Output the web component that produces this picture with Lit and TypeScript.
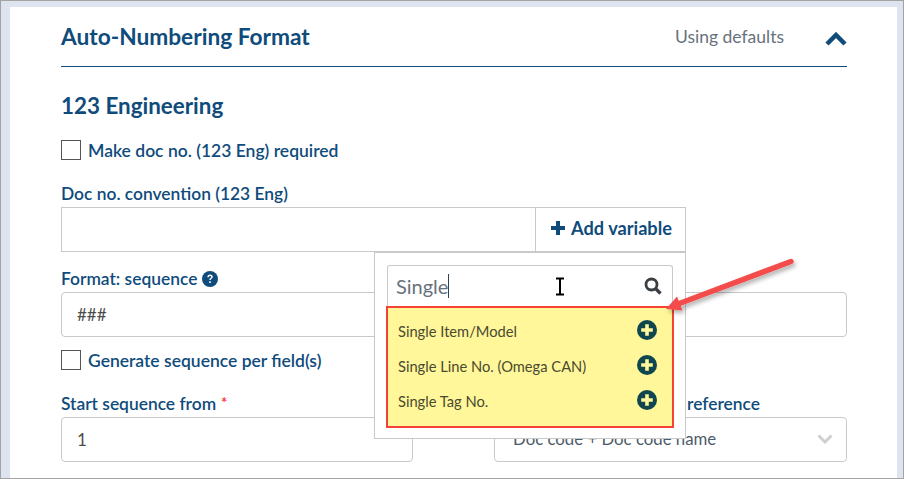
import { LitElement, html, css, svg } from "lit";
import { customElement } from "lit/decorators.js";

const plus = html`<svg class="plus" viewBox="0 0 20 20" width="20" height="20"><circle cx="10" cy="10" r="10" fill="#10474f"/><path d="M8.200 4.200h3.600v4h4v3.600h-4v4H8.200v-4h-4V8.200h4z" fill="#fff79a"/></svg>`;

@customElement("app-root")
export class AppRoot extends LitElement {
  static styles = css`
    :host { display: block; width: 904px; height: 479px; overflow: hidden; font-family: Lato, "Open Sans", sans-serif; color: #0f4c7c; }
    * { box-sizing: border-box; }
    .frame { width: 904px; height: 479px; background: #dde3ef; border: 1px solid #a3a3a3; padding: 6px 6px 0 9px; display: flex; }
    .panel { position: relative; flex: 1; background: #fff; padding: 0 50px 0 51px; }
    .head { height: 60px; border-bottom: 1px solid #0f4c7c; display: flex; align-items: center; }
    .head h2 { margin: 0; flex: 1; font-size: 22.700px; font-weight: 700; line-height: 58px; }
    .status { font-size: 17.500px; color: #68727c; margin-right: 41px; margin-bottom: 0; }
    .chev { display: block; margin-top: 5px; }
    h3 { margin: 24px 0 0; font-size: 22.400px; font-weight: 700; line-height: 30px; }
    .check { display: flex; align-items: center; gap: 7px; font-size: 17.500px; font-weight: 600; line-height: 20px; }
    .check span.txt { position: relative; top: 1px; }
    .box { width: 20px; height: 20px; border: 1px solid #555; background: #fff; }
    .c1 { margin-top: 19px; }
    .c2 { margin-top: 13px; }
    .label { font-size: 17.400px; font-weight: 600; line-height: 20px; display: flex; align-items: center; gap: 5px; }
    .l1 { margin-top: 24px; }
    .l2 { margin-top: 24px; }
    .l3 { margin-top: 17px; }
    .right { justify-content: flex-end; padding-right: 87px; }
    .group { display: flex; width: 625px; height: 45px; margin-top: 3px; border: 1px solid #c9c9c9; }
    .group .fill { flex: 1; }
    .add { width: 150px; border-left: 1px solid #c9c9c9; padding: 0 0 3px 2px; display: flex; align-items: center; justify-content: center; gap: 6px; font-size: 18.200px; font-weight: 700; color: #0f4c7c; }
    .input { height: 45px; margin-top: 3px; border: 1px solid #c9c9c9; border-radius: 4px; padding: 0 15px; display: flex; align-items: center; font-size: 17px; color: #4d4d4d; }
    .cols { display: grid; grid-template-columns: 352px 353px; column-gap: 81px; }
    .star { color: #f22; font-size: 15px; align-self: flex-start; line-height: 16px; }
    .sel { justify-content: space-between; color: #4d5b69; padding: 0 13px 2px 18px; font-size: 16.800px; }
    .pop { position: absolute; left: 364px; top: 245px; width: 312px; height: 187px; background: #fff; border: 1px solid #c9c9c9; padding: 12px; z-index: 2; }
    .search { height: 41px; border: 1px solid #c9c9c9; border-bottom: none; border-radius: 3px 3px 0 0; padding: 0 10px 0 8px; display: flex; align-items: center; font-size: 20px; color: #68727c; position: relative; }
    .caret { width: 1px; height: 24px; background: #2d3f50; }
    .search .mag { margin-left: auto; }
    .ibeam { position: absolute; left: 166px; top: 11px; }
    .list { height: 122px; margin: 0 -1px; width: 288px; background: #fff79a; border: 2px solid #f44336; padding: 5px 15px 0 10px; display: flex; flex-direction: column; }
    .item { height: 35px; display: flex; align-items: center; justify-content: space-between; font-size: 14.700px; color: #4a4a30; }
    .plus { display: block; margin-top: -2px; }
    .arrow { position: absolute; left: 0; top: 0; z-index: 3; pointer-events: none; overflow: visible; }
  `;

  render() {
    return html`
      <div class="frame">
        <div class="panel">
          <div class="head">
            <h2>Auto-Numbering Format</h2>
            <span class="status">Using defaults</span>
            <svg class="chev" width="22" height="14" viewBox="0 0 22 14"><path d="M2 12 11 3l9 9" fill="none" stroke="#0f4c7c" stroke-width="4.500"/></svg>
          </div>
          <h3>123 Engineering</h3>
          <div class="check c1"><span class="box"></span><span class="txt">Make doc no. (123 Eng) required</span></div>
          <div class="label l1">Doc no. convention (123 Eng)</div>
          <div class="group">
            <div class="fill"></div>
            <div class="add">
              <svg width="14" height="14" viewBox="0 0 14 14"><path d="M5 0h4v5h5v4H9v5H5V9H0V5h5z" fill="#0f4c7c"/></svg>
              Add variable
            </div>
          </div>
          <div class="label l3">Format: sequence
            <svg width="16" height="16" viewBox="0 0 16 16"><circle cx="8" cy="8" r="8" fill="#0f4c7c"/><path d="M5.300 6.200c0-1.700 1.200-2.700 2.800-2.700s2.700 1 2.700 2.300c0 1.900-2.100 1.900-2.100 3.300H7.200c0-2.200 2-2.200 2-3.200 0-.5-.5-.9-1.100-.9-.7 0-1.200.4-1.300 1.200zM7.200 10.200h1.600v1.800H7.200z" fill="#fff"/></svg>
          </div>
          <div class="input">###</div>
          <div class="check c2"><span class="box"></span><span class="txt">Generate sequence per field(s)</span></div>
          <div class="cols">
            <div>
              <div class="label l2">Start sequence from <span class="star">*</span></div>
              <div class="input">1</div>
            </div>
            <div>
              <div class="label l2 right">reference</div>
              <div class="input sel">Doc code + Doc code name
                <svg width="16" height="10" viewBox="0 0 16 10"><path d="M1.500 1.500 8 8l6.500-6.500" fill="none" stroke="#d0d0d0" stroke-width="3"/></svg>
              </div>
            </div>
          </div>
          <div class="pop">
            <div class="search">Single<span class="caret"></span>
              <svg class="ibeam" width="12" height="19" viewBox="0 0 12 19"><path d="M2 1.500h8M2 17.500h8M6 1.500v16" fill="none" stroke="#000" stroke-width="2"/></svg>
              <svg class="mag" width="18" height="18" viewBox="0 0 18 18"><circle cx="7.500" cy="7.500" r="5.500" fill="none" stroke="#3a3f44" stroke-width="2.800"/><path d="M11.500 11.500l5 5" stroke="#3a3f44" stroke-width="3.400"/></svg>
            </div>
            <div class="list">
              <div class="item">Single Item/Model ${plus}</div>
              <div class="item">Single Line No. (Omega CAN) ${plus}</div>
              <div class="item">Single Tag No. ${plus}</div>
            </div>
          </div>
          <svg class="arrow" width="887" height="470" viewBox="0 0 887 470">
            <defs><filter id="s" x="-20%" y="-20%" width="140%" height="160%"><feDropShadow dx="2" dy="3" stdDeviation="2" flood-color="#000" flood-opacity=".3"/></filter></defs>
            ${svg`<g filter="url(#s)"><path d="M781 254.500 668 297" stroke="#f44b4b" stroke-width="5.500" stroke-linecap="round" fill="none"/><path d="M656 302l11-12.500 5.500 14z" fill="#f44b4b"/></g>`}
          </svg>
        </div>
      </div>
    `;
  }
}
